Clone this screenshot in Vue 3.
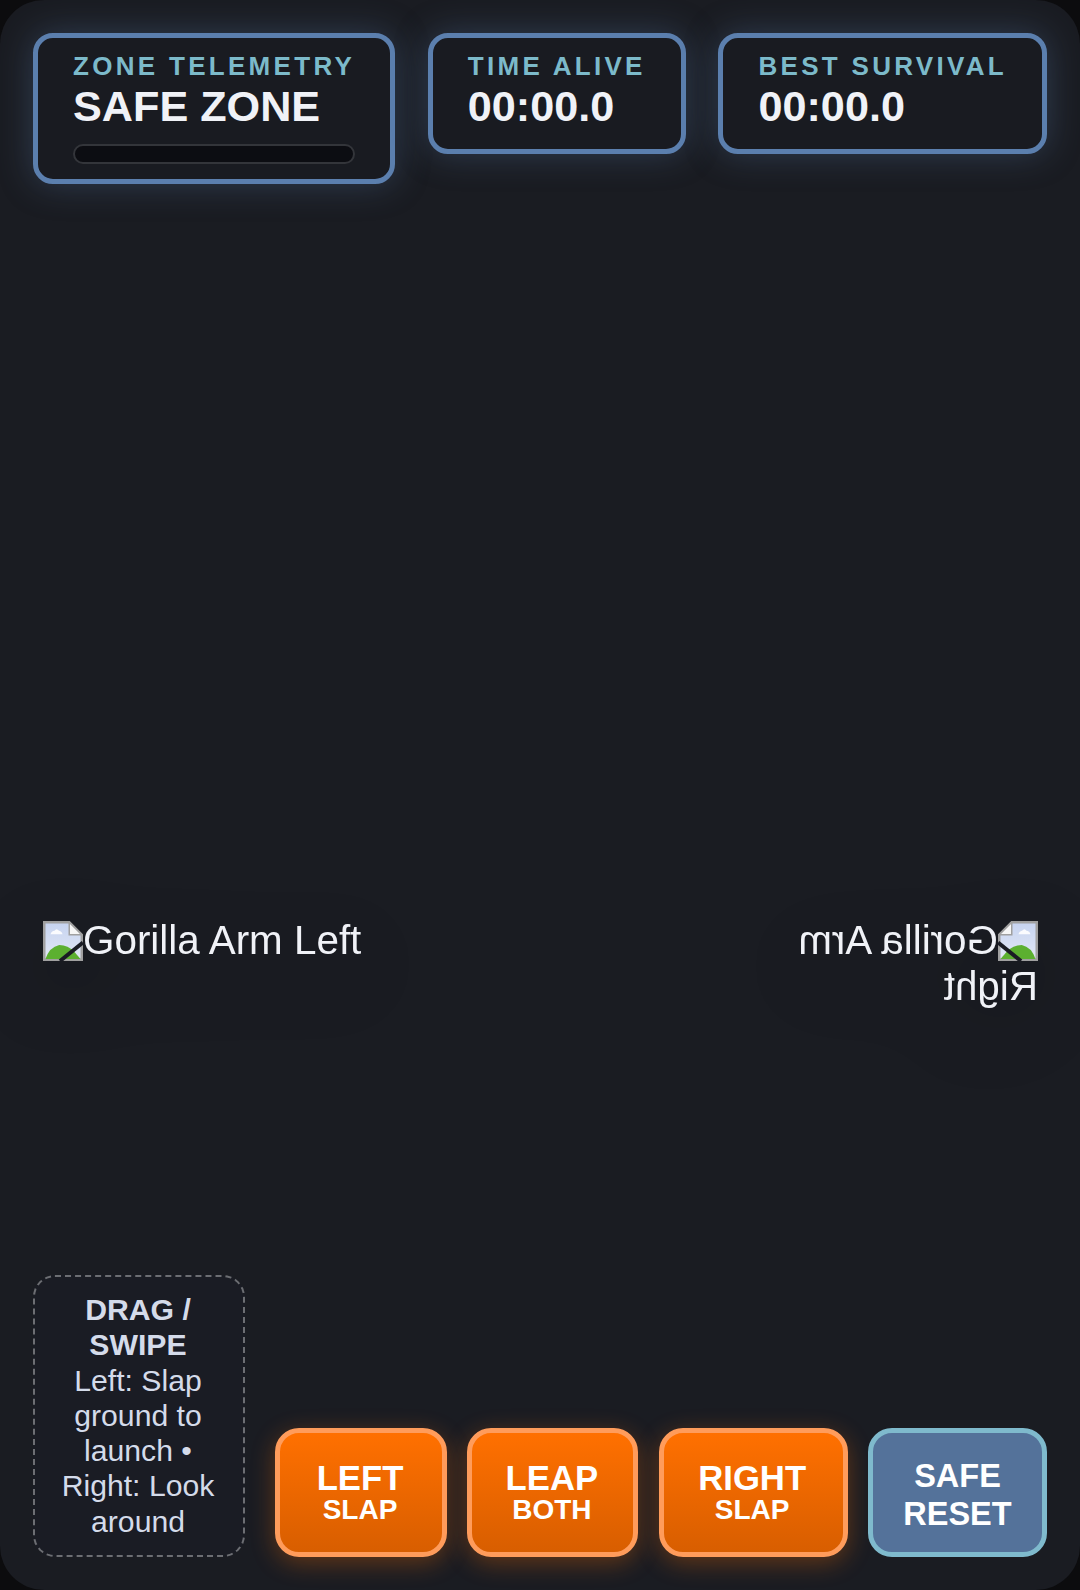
<script setup>
const panels = [
  { label: 'ZONE TELEMETRY', value: 'SAFE ZONE', bar: true },
  { label: 'TIME ALIVE', value: '00:00.0' },
  { label: 'BEST SURVIVAL', value: '00:00.0' }
]
const arms = [
  { alt: 'Gorilla Arm Left', mirrored: false },
  { alt: 'Gorilla Arm Right', mirrored: true }
]
const buttons = [
  { main: 'LEFT', sub: 'SLAP', width: 172 },
  { main: 'LEAP', sub: 'BOTH', width: 171 },
  { main: 'RIGHT', sub: 'SLAP', width: 189 }
]
</script>

<template>
  <div class="page">
    <div class="game">
      <div class="hud">
        <div v-for="p in panels" :key="p.label" class="panel">
          <div class="label">{{ p.label }}</div>
          <div class="value">{{ p.value }}</div>
          <div v-if="p.bar" class="bar"></div>
        </div>
      </div>

      <div class="stage">
        <div v-for="a in arms" :key="a.alt" class="arm" :class="{ mirrored: a.mirrored }">
          <svg class="broken" viewBox="0 0 16 16" width="40" height="40">
            <defs>
              <linearGradient id="sky" x1="0" y1="0" x2="0" y2="1">
                <stop offset="0" stop-color="#c6d3f0" />
                <stop offset="1" stop-color="#e2e8f5" />
              </linearGradient>
            </defs>
            <path d="M0.5 0.5H10.5L15.5 5.5V15.5H0.5Z" fill="url(#sky)" stroke="#a0a0a0" />
            <path d="M10.5 0.5V5.5H15.5Z" fill="#f6f6f6" stroke="#a0a0a0" stroke-width=".6" />
            <path d="M3 5.3Q3.4 4 4.6 3.9Q5.4 2.6 6.4 3.9Q7.6 4.1 7.8 5.3Z" fill="#fafbfe" />
            <path d="M1 15.2Q2.6 10.4 6.5 9.6Q10 9.6 12.6 12.4L15 15.2Z" fill="#5cb030" />
            <path d="M6.8 16L16 8.6" stroke="#1a1c24" stroke-width="1.6" />
          </svg>{{ a.alt }}
        </div>
      </div>

      <div class="controls">
        <div class="hint">
          <strong>DRAG / SWIPE</strong><br />
          Left: Slap ground to launch • Right: Look around
        </div>
        <div class="buttons">
          <button
            v-for="b in buttons"
            :key="b.main"
            class="btn action"
            :style="{ width: b.width + 'px' }"
          >
            <span class="main">{{ b.main }}</span>
            <span class="sub">{{ b.sub }}</span>
          </button>
          <button class="btn safe">SAFE<br />RESET</button>
        </div>
      </div>
    </div>
  </div>
</template>

<style>
html, body { margin: 0; background: #0c0c0e; }
</style>

<style scoped>
.page {
  width: 1080px;
  height: 1590px;
  background: #0c0c0e;
  font-family: "Liberation Sans", Arial, sans-serif;
  overflow: hidden;
}
.game {
  box-sizing: border-box;
  width: 1080px;
  height: 1590px;
  padding: 33px;
  border-radius: 44px;
  background: #1a1c22;
  display: flex;
  flex-direction: column;
  overflow: hidden;
}
.hud {
  display: flex;
  align-items: flex-start;
  justify-content: space-between;
}
.panel {
  box-sizing: border-box;
  padding: 13px 35px 18px;
  border: 5px solid #5b7fae;
  border-radius: 20px;
  background: #191b21;
  box-shadow: 0 0 34px rgba(91, 127, 174, 0.34);
}
.label {
  font-size: 26px;
  line-height: 30px;
  letter-spacing: 3.3px;
  font-weight: 700;
  color: #7cbaca;
  white-space: nowrap;
}
.value {
  font-size: 43.2px;
  line-height: 50px;
  font-weight: 700;
  color: #f0f2f7;
  white-space: nowrap;
}
.bar {
  box-sizing: border-box;
  height: 20px;
  margin-top: 13px;
  margin-bottom: -3px;
  border: 2px solid #33353a;
  border-radius: 10px;
  background: #0c0d12;
}
.stage {
  flex: 1;
  display: flex;
  justify-content: space-between;
  align-items: flex-start;
  padding: 733px 9px 0 10px;
}
.arm {
  width: 320px;
  font-size: 40.4px;
  line-height: 46px;
  color: #f0f2f7;
  filter: drop-shadow(0 24px 36px rgba(0, 0, 0, 0.22));
}
.mirrored {
  transform: scaleX(-1);
}
.broken {
  vertical-align: -7px;
  filter: blur(0.4px);
}
.controls {
  display: flex;
  align-items: flex-end;
  gap: 30px;
}
.hint {
  box-sizing: border-box;
  flex: none;
  width: 212px;
  padding: 15px 16px 16px 14px;
  border: 2px dashed #6c6e73;
  border-radius: 22px;
  background: #1a1c24;
  color: #d4dbea;
  font-size: 30.2px;
  line-height: 35.3px;
  text-align: center;
}
.buttons {
  flex: 1;
  display: flex;
  justify-content: space-between;
  gap: 20px;
}
.btn {
  box-sizing: border-box;
  flex: none;
  height: 129px;
  padding: 0;
  border-radius: 24px;
  font-family: inherit;
  font-weight: 700;
  color: #fff;
  display: flex;
  flex-direction: column;
  align-items: center;
  justify-content: center;
}
.action {
  padding: 0 2px 2px 0;
  border: 5px solid #ff9c5b;
  background: linear-gradient(180deg, #ff7000, #d85e00);
  box-shadow: 0 6px 24px rgba(255, 112, 0, 0.32);
}
.main {
  font-size: 34.7px;
  line-height: 36px;
}
.sub {
  margin-top: -1px;
  font-size: 28px;
  line-height: 29px;
}
.safe {
  display: block;
  width: 179px;
  padding-top: 5px;
  border: 5px solid #7fbacd;
  background: #54729a;
  font-size: 32.5px;
  line-height: 38px;
}
</style>
